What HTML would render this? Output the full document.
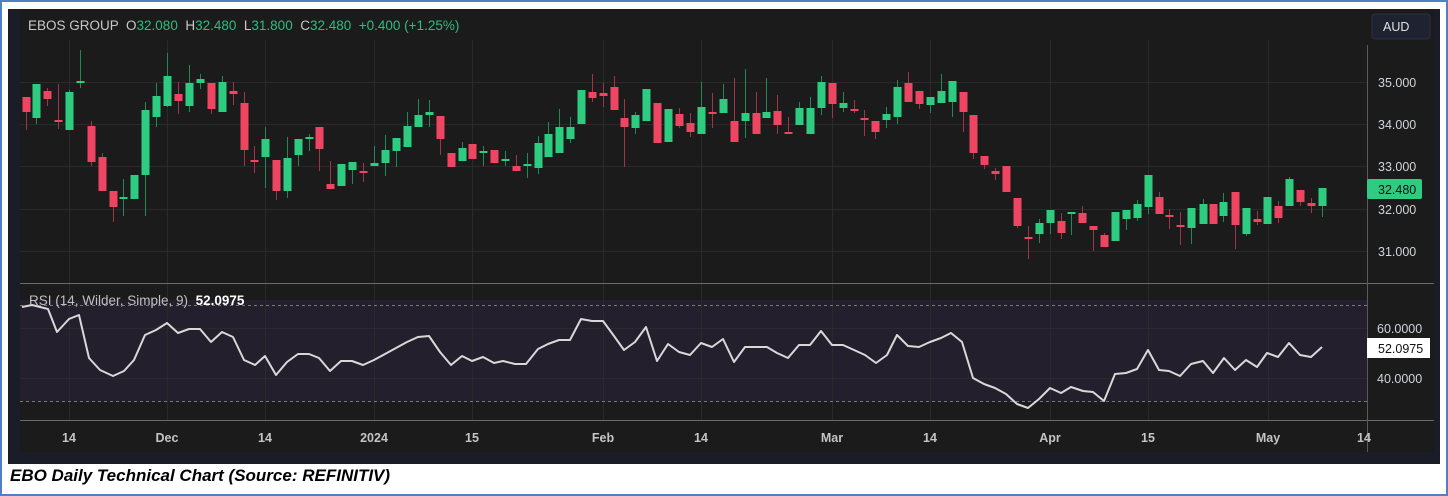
<!DOCTYPE html>
<html><head><meta charset="utf-8">
<style>
html,body{margin:0;padding:0;background:#fff;}
body{width:1448px;height:496px;position:relative;overflow:hidden;font-family:"Liberation Sans",sans-serif;}
#frame{position:absolute;left:0;top:0;width:1444px;height:492px;border:2px solid #4f7fc4;}
svg{position:absolute;left:0;top:0;}
.cap{position:absolute;left:10px;top:466px;font-size:17px;font-weight:bold;font-style:italic;color:#000;}
</style></head><body>
<div id="frame"></div>
<svg id="s" width="1448" height="496" xmlns="http://www.w3.org/2000/svg">
<rect x="8" y="9" width="1432" height="455" fill="#1a1d27"/>
<rect x="20" y="9" width="1414" height="443" fill="#1b1b1b"/>
<rect x="20" y="300" width="1347" height="102" fill="#241f2c"/>
<g id="grid" stroke="#2a2a2a" stroke-width="1"></g>
<line x1="20" y1="283.5" x2="1434" y2="283.5" stroke="#6a6a6a"/>
<line x1="20" y1="420.5" x2="1434" y2="420.5" stroke="#6a6a6a"/>
<line x1="1367.5" y1="45" x2="1367.5" y2="452" stroke="#5a5a5a"/>
<line x1="20" y1="305.5" x2="1367" y2="305.5" stroke="#777" stroke-dasharray="3,3"/>
<line x1="20" y1="401.5" x2="1367" y2="401.5" stroke="#777" stroke-dasharray="3,3"/>
<g id="c"></g>
<polyline id="rsi" fill="none" stroke="#d8d8d8" stroke-width="2" stroke-linejoin="round"/>
<g font-family="Liberation Sans, sans-serif" font-size="12.5" fill="#d1d4dc">
<text x="28" y="30" font-size="13.5" fill="#c8c8c8" xml:space="preserve">EBOS GROUP  O<tspan fill="#2dbd80">32.080</tspan>  H<tspan fill="#2dbd80">32.480</tspan>  L<tspan fill="#2dbd80">31.800</tspan>  C<tspan fill="#2dbd80">32.480  +0.400 (+1.25%)</tspan></text>
<text x="29" y="305" font-size="13.5" fill="#c0c0c0" xml:space="preserve">RSI (14, Wilder, Simple, 9)  <tspan fill="#fff" font-weight="bold">52.0975</tspan></text>
<rect x="1372" y="14" width="58" height="25" rx="3" fill="#1f2230" stroke="#2c3040"/>
<text x="1383" y="31" fill="#e0e0e0">AUD</text>
<text x="1378" y="87">35.000</text>
<text x="1378" y="129">34.000</text>
<text x="1378" y="171">33.000</text>
<text x="1378" y="214">32.000</text>
<text x="1378" y="256">31.000</text>
<rect x="1367" y="179" width="55" height="20" rx="2" fill="#2ecc80"/>
<text x="1378" y="194" fill="#111">32.480</text>
<text x="1377" y="333">60.0000</text>
<text x="1377" y="383">40.0000</text>
<rect x="1367" y="338" width="63" height="20" fill="#fff"/>
<text x="1378" y="353" fill="#111">52.0975</text>
<g font-weight="bold" fill="#c4c4c4" text-anchor="middle">
<text x="69" y="442">14</text><text x="167" y="442">Dec</text><text x="265" y="442">14</text><text x="374" y="442">2024</text><text x="472" y="442">15</text><text x="603" y="442">Feb</text><text x="701" y="442">14</text><text x="832" y="442">Mar</text><text x="930" y="442">14</text><text x="1050" y="442">Apr</text><text x="1148" y="442">15</text><text x="1268" y="442">May</text><text x="1364" y="442">14</text>
</g>
</g>
</svg>
<div class="cap">EBO Daily Technical Chart (Source: REFINITIV)</div>
<script>
var NS="http://www.w3.org/2000/svg";
function el(t,a,p){var e=document.createElementNS(NS,t);for(var k in a)e.setAttribute(k,a[k]);p.appendChild(e);return e;}
var g=document.getElementById('grid');
[82,124,166,209,251,328,378].forEach(function(y){el('line',{x1:20,x2:1367,y1:y+.5,y2:y+.5},g);});
[69,167,265,374,472,603,701,832,930,1050,1148,1268].forEach(function(x){el('line',{x1:x+.5,x2:x+.5,y1:40,y2:420},g);});
var C=[
[26,97,112,97,130,'r'],[36,84,118,84,124,'g'],[47,91,99,88,106,'r'],[58,120,122,84,129,'r'],[69,92,130,90,130,'g'],[80,81,83,50,88,'g'],
[91,126,162,121,166,'r'],[102,157,191,153,191,'r'],[113,191,207,191,222,'r'],[123,197,199,179,216,'g'],[134,175,199,175,199,'g'],[145,110,175,102,216,'g'],
[156,96,117,83,127,'g'],[167,76,106,53,107,'g'],[178,94,101,82,114,'r'],[189,83,106,65,112,'g'],[200,79,83,74,89,'g'],[211,83,109,83,114,'r'],
[222,82,112,76,112,'g'],[233,91,94,82,105,'r'],[244,103,150,92,166,'r'],[254,160,162,146,173,'r'],[265,139,157,127,188,'g'],[276,160,191,160,200,'r'],
[287,158,191,137,198,'g'],[298,139,155,139,166,'g'],[309,137,139,134,151,'g'],[319,127,149,127,171,'r'],[330,184,189,161,189,'r'],[341,164,186,164,186,'g'],
[352,162,170,162,184,'g'],[363,171,173,163,182,'r'],[374,163,166,146,166,'g'],[385,150,163,135,176,'g'],[396,138,151,138,167,'g'],[407,126,147,112,147,'g'],
[418,115,127,99,127,'g'],[429,112,115,100,127,'g'],[440,116,139,116,155,'r'],[451,153,167,153,167,'r'],[462,148,161,142,161,'g'],[472,144,159,144,159,'r'],
[483,151,152,146,166,'g'],[494,150,163,150,163,'r'],[505,159,161,151,166,'g'],[516,166,171,155,171,'r'],[527,164,166,153,178,'g'],[538,143,168,136,174,'g'],
[548,134,157,122,157,'g'],[559,127,153,109,153,'g'],[570,127,139,117,143,'g'],[581,90,124,90,124,'g'],[592,92,98,74,102,'r'],[603,93,96,83,107,'r'],
[614,87,110,76,110,'r'],[624,118,127,99,167,'r'],[635,115,128,112,134,'g'],[646,89,121,89,121,'g'],[657,103,143,103,143,'r'],[668,109,142,109,142,'g'],
[679,114,126,108,128,'r'],[690,123,132,113,137,'r'],[701,107,134,82,134,'g'],[712,112,114,93,128,'r'],[723,99,113,84,113,'g'],[734,121,142,78,142,'r'],
[745,113,121,69,138,'g'],[756,113,134,92,134,'r'],[766,112,118,78,118,'g'],[777,111,125,95,134,'r'],[788,132,134,117,134,'r'],[799,108,125,102,125,'g'],
[810,108,134,97,134,'g'],[821,82,108,76,115,'g'],[832,83,104,83,118,'r'],[843,103,108,92,112,'g'],[854,109,111,100,113,'r'],[864,118,120,110,136,'r'],
[875,121,132,121,139,'r'],[886,114,120,107,128,'g'],[897,87,117,80,124,'g'],[908,83,102,72,102,'r'],[919,91,104,91,109,'r'],[930,97,105,97,113,'g'],
[941,91,103,74,103,'g'],[952,81,102,81,117,'g'],[963,92,112,92,132,'r'],[973,115,153,115,159,'r'],[984,156,165,156,169,'r'],[995,171,174,168,180,'r'],
[1006,166,192,166,192,'r'],[1017,198,226,198,228,'r'],[1028,237,238,226,259,'r'],[1039,223,234,219,243,'g'],[1050,210,223,210,234,'g'],[1061,221,233,213,239,'r'],
[1071,212,214,212,235,'g'],[1082,213,223,206,223,'r'],[1093,226,230,226,251,'r'],[1104,235,247,233,247,'r'],[1115,212,241,212,241,'g'],[1126,210,219,210,230,'g'],
[1137,204,218,200,221,'g'],[1148,175,207,175,214,'g'],[1159,197,214,192,214,'r'],[1169,215,216,209,229,'r'],[1180,225,227,212,245,'r'],[1191,208,228,208,244,'g'],
[1203,204,224,199,224,'g'],[1213,204,224,204,224,'r'],[1223,202,216,193,222,'g'],[1235,192,225,192,249,'r'],[1246,208,234,208,236,'g'],[1257,219,222,211,225,'r'],
[1267,197,224,197,224,'g'],[1278,206,218,201,223,'r'],[1289,179,206,177,206,'g'],[1300,190,202,190,206,'r'],[1311,203,206,198,213,'r'],[1322,188,206,188,217,'g']];
var cg=document.getElementById('c');
C.forEach(function(d){var up=d[5]=='g';var col=up?'#2ecc80':'#ee4562';var wc=up?'#1f8a57':'#a33447';
el('line',{x1:d[0]+.5,x2:d[0]+.5,y1:d[3],y2:d[4],stroke:wc,'stroke-width':1},cg);
var h=Math.max(d[2]-d[1],2);el('rect',{x:d[0]-3.5,y:d[1],width:8,height:h,fill:col},cg);});
var R="22,307 32,305 48,309 57,332 69,319 79,315 89,358 100,370 113,376 124,371 134,360 145,335 156,330 167,323 178,333 189,329 200,329 211,342 222,332 233,337 244,360 255,365 265,356 276,375 287,362 298,354 309,354 319,358 330,371 341,361 352,361 363,365 374,360 385,354 396,348 407,342 418,337 429,336 440,352 451,365 462,356 472,361 483,357 494,363 503,361 515,364 526,364 538,349 548,344 559,340 570,340 581,319 592,321 603,321 614,336 624,350 635,342 646,327 657,361 668,344 679,352 690,355 701,343 712,347 723,339 734,362 745,347 756,347 767,347 777,353 788,358 799,345 810,345 821,331 832,345 843,345 854,350 865,355 876,363 887,355 897,335 908,346 919,347 930,342 941,338 951,333 962,342 973,378 984,384 995,388 1006,394 1017,404 1028,408 1039,399 1050,388 1061,393 1071,387 1083,391 1093,392 1104,401 1115,374 1126,373 1137,369 1148,350 1159,370 1169,371 1180,376 1191,364 1203,361 1213,373 1224,358 1235,370 1246,360 1257,367 1267,353 1278,357 1289,343 1300,355 1311,357 1322,347";
document.getElementById('rsi').setAttribute('points',R);
</script>
</body></html>
